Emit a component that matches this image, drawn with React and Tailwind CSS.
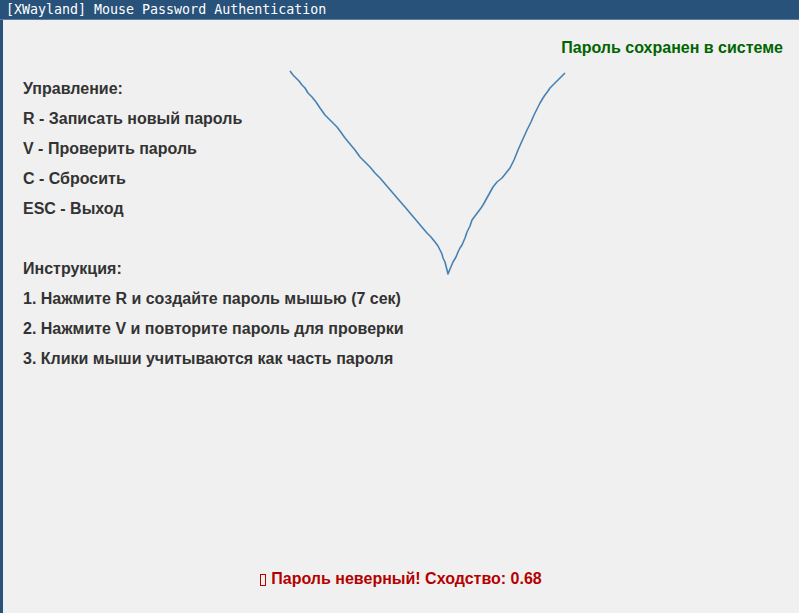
import React from "react";

const pts = [
  [290, 71], [293, 75], [296, 78], [299, 81], [302, 85], [305, 88], [308, 93], [312, 97], [316, 102], [320, 108], [325, 115], [329, 119], [333, 123], [337, 127], [340, 131],
  [345, 138], [350, 144], [355, 150], [360, 157], [365, 162], [370, 167], [375, 173], [380, 178], [386, 185], [392, 192], [398, 199], [405, 207], [410, 213], [416, 220],
  [421, 226], [427, 233], [431, 237], [435, 242], [438, 246], [440, 250], [442, 254], [443, 258], [445, 262], [446, 266], [447, 270], [448, 274],
  [450, 269], [453, 262], [456, 257], [458, 252], [460, 248], [462, 245], [465, 238], [467, 232], [470, 226], [472, 220], [475, 216], [478, 212], [481, 208], [483, 205],
  [488, 196], [493, 187], [497, 182], [502, 178], [506, 173], [510, 168], [514, 160], [518, 150], [522, 141], [527, 130], [531, 122], [534, 115], [537, 109], [540, 103],
  [543, 98], [545, 95], [548, 91], [550, 88], [554, 84], [558, 80], [562, 76], [565, 73],
];

export default function App() {
  const body = "font-['Liberation_Sans',Arial,sans-serif] font-bold text-[16px] text-[#333333]";
  return (
    <div className="w-[799px] h-[613px] flex flex-col bg-[#f0f0f0] overflow-hidden">
      <div className="h-[20px] shrink-0 bg-[#28527a] border-b border-[#5a7da0] flex items-center pl-[6px] text-white text-[13.3px] font-['DejaVu_Sans_Mono',monospace] leading-none">
        [XWayland] Mouse Password Authentication
      </div>
      <div className="flex flex-1 min-h-0">
        <div className="w-[3px] bg-[#28527a] shrink-0" />
        <div className={`relative flex-1 flex flex-col ${body}`}>
          <svg className="absolute left-0 top-0 pointer-events-none" width="796" height="593" viewBox="3 20 796 593">
            <polyline points={pts.map((p) => p.join(",")).join(" ")} fill="none" stroke="#4682b4" strokeWidth="1.6" strokeLinejoin="round" />
          </svg>
          <div className="h-[30px] mt-[13px] flex items-center justify-end pr-[16px] text-[#006400]">
            Пароль сохранен в системе
          </div>
          <div className="mt-[11px] pl-[20px] flex flex-col">
            {["Управление:", "R - Записать новый пароль", "V - Проверить пароль", "C - Сбросить", "ESC - Выход", "", "Инструкция:", "1. Нажмите R и создайте пароль мышью (7 сек)", "2. Нажмите V и повторите пароль для проверки", "3. Клики мыши учитываются как часть пароля"].map((t, i) => (
              <div key={i} className="h-[30px] flex items-center">{t}</div>
            ))}
          </div>
          <div className="mt-auto mb-[19px] h-[30px] flex items-center justify-center text-[#b40000]">
            <span className="inline-block w-[6px] h-[12px] border border-[#b40000] mr-[5px] mt-[1px]" />
            Пароль неверный! Сходство: 0.68
          </div>
        </div>
      </div>
    </div>
  );
}
